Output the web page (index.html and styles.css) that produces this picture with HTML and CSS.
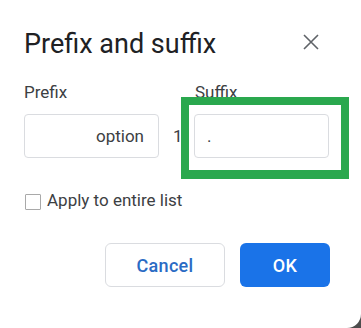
FILE: index.html
```html
<!DOCTYPE html>
<html>
<head>
<meta charset="utf-8">
<link rel="stylesheet" href="styles.css">
</head>
<body>
<div class="dialog">
  <div class="title-row">
    <div class="title">Prefix and suffix</div>
    <svg class="close" width="24" height="24" viewBox="0 0 24 24"><path d="M5 5L19 19M19 5L5 19" stroke="#5f6368" stroke-width="1.6" fill="none"/></svg>
  </div>
  <div class="fields">
    <div class="label">Prefix</div>
    <div></div>
    <div class="label suffix-label">Suffix</div>
    <div class="input prefix-input">option</div>
    <div class="mid">1</div>
    <div class="input suffix-input">.</div>
  </div>
  <div class="check-row">
    <span class="checkbox"></span>
    <span class="check-label">Apply to entire list</span>
  </div>
  <div class="buttons">
    <button class="btn cancel">Cancel</button>
    <button class="btn ok">OK</button>
  </div>
  <div class="highlight"></div>
</div>
</body>
</html>
```
FILE: styles.css
```css
html, body {
  margin: 0;
  padding: 0;
  background: #4d4d4d;
}
body {
  width: 361px;
  height: 328px;
  overflow: hidden;
  font-family: Roboto, "Liberation Sans", sans-serif;
}
.dialog {
  position: relative;
  box-sizing: border-box;
  width: 361px;
  height: 328px;
  background: #fff;
  border-bottom-right-radius: 14px;
  padding: 28px 31px 0 24px;
}
.title-row {
  display: flex;
  justify-content: space-between;
  align-items: center;
  height: 32px;
}
.title {
  font-size: 27px;
  line-height: 32px;
  color: #202124;
}
.close {
  margin-right: 7px;
  margin-top: -4px;
}
.fields {
  margin-top: 22px;
  display: grid;
  grid-template-columns: 135px 35px 135px;
  grid-template-rows: 20px 44px;
  row-gap: 12px;
}
.label {
  font-size: 17px;
  line-height: 20px;
  color: #3c4043;
}
.suffix-label {
  padding-left: 1px;
}
.input {
  box-sizing: border-box;
  border: 1px solid #dadce0;
  border-radius: 4px;
  font-size: 17px;
  color: #3c4043;
  display: flex;
  align-items: center;
}
.prefix-input {
  justify-content: flex-end;
  padding-right: 14px;
}
.suffix-input {
  padding-left: 12px;
}
.mid {
  font-size: 17px;
  color: #3c4043;
  display: flex;
  align-items: center;
  padding-left: 14px;
}
.check-row {
  margin-top: 32px;
  display: flex;
  align-items: center;
  height: 20px;
}
.checkbox {
  box-sizing: border-box;
  width: 16px;
  height: 16px;
  border: 1px solid #a9a9a9;
  border-radius: 1px;
  margin-left: 1px;
  margin-top: 3px;
}
.check-label {
  margin-left: 6px;
  font-size: 17px;
  line-height: 20px;
  color: #3c4043;
}
.buttons {
  margin-top: 33px;
  display: flex;
  justify-content: flex-end;
  gap: 15px;
}
.btn {
  box-sizing: border-box;
  height: 44px;
  border-radius: 6px;
  font-family: Roboto, "Liberation Sans", sans-serif;
  font-size: 18px;
  font-weight: 500;
  letter-spacing: 0.3px;
  cursor: pointer;
}
.cancel {
  width: 120px;
  background: #fff;
  border: 1px solid #dadce0;
  color: #2a6bc4;
}
.ok {
  width: 90px;
  background: #1a73e8;
  border: none;
  color: #fff;
}
.highlight {
  position: absolute;
  left: 181px;
  top: 97px;
  width: 168px;
  height: 82px;
  box-sizing: border-box;
  border: 8px solid #2aa84e;
  border-bottom-width: 9px;
}
```
